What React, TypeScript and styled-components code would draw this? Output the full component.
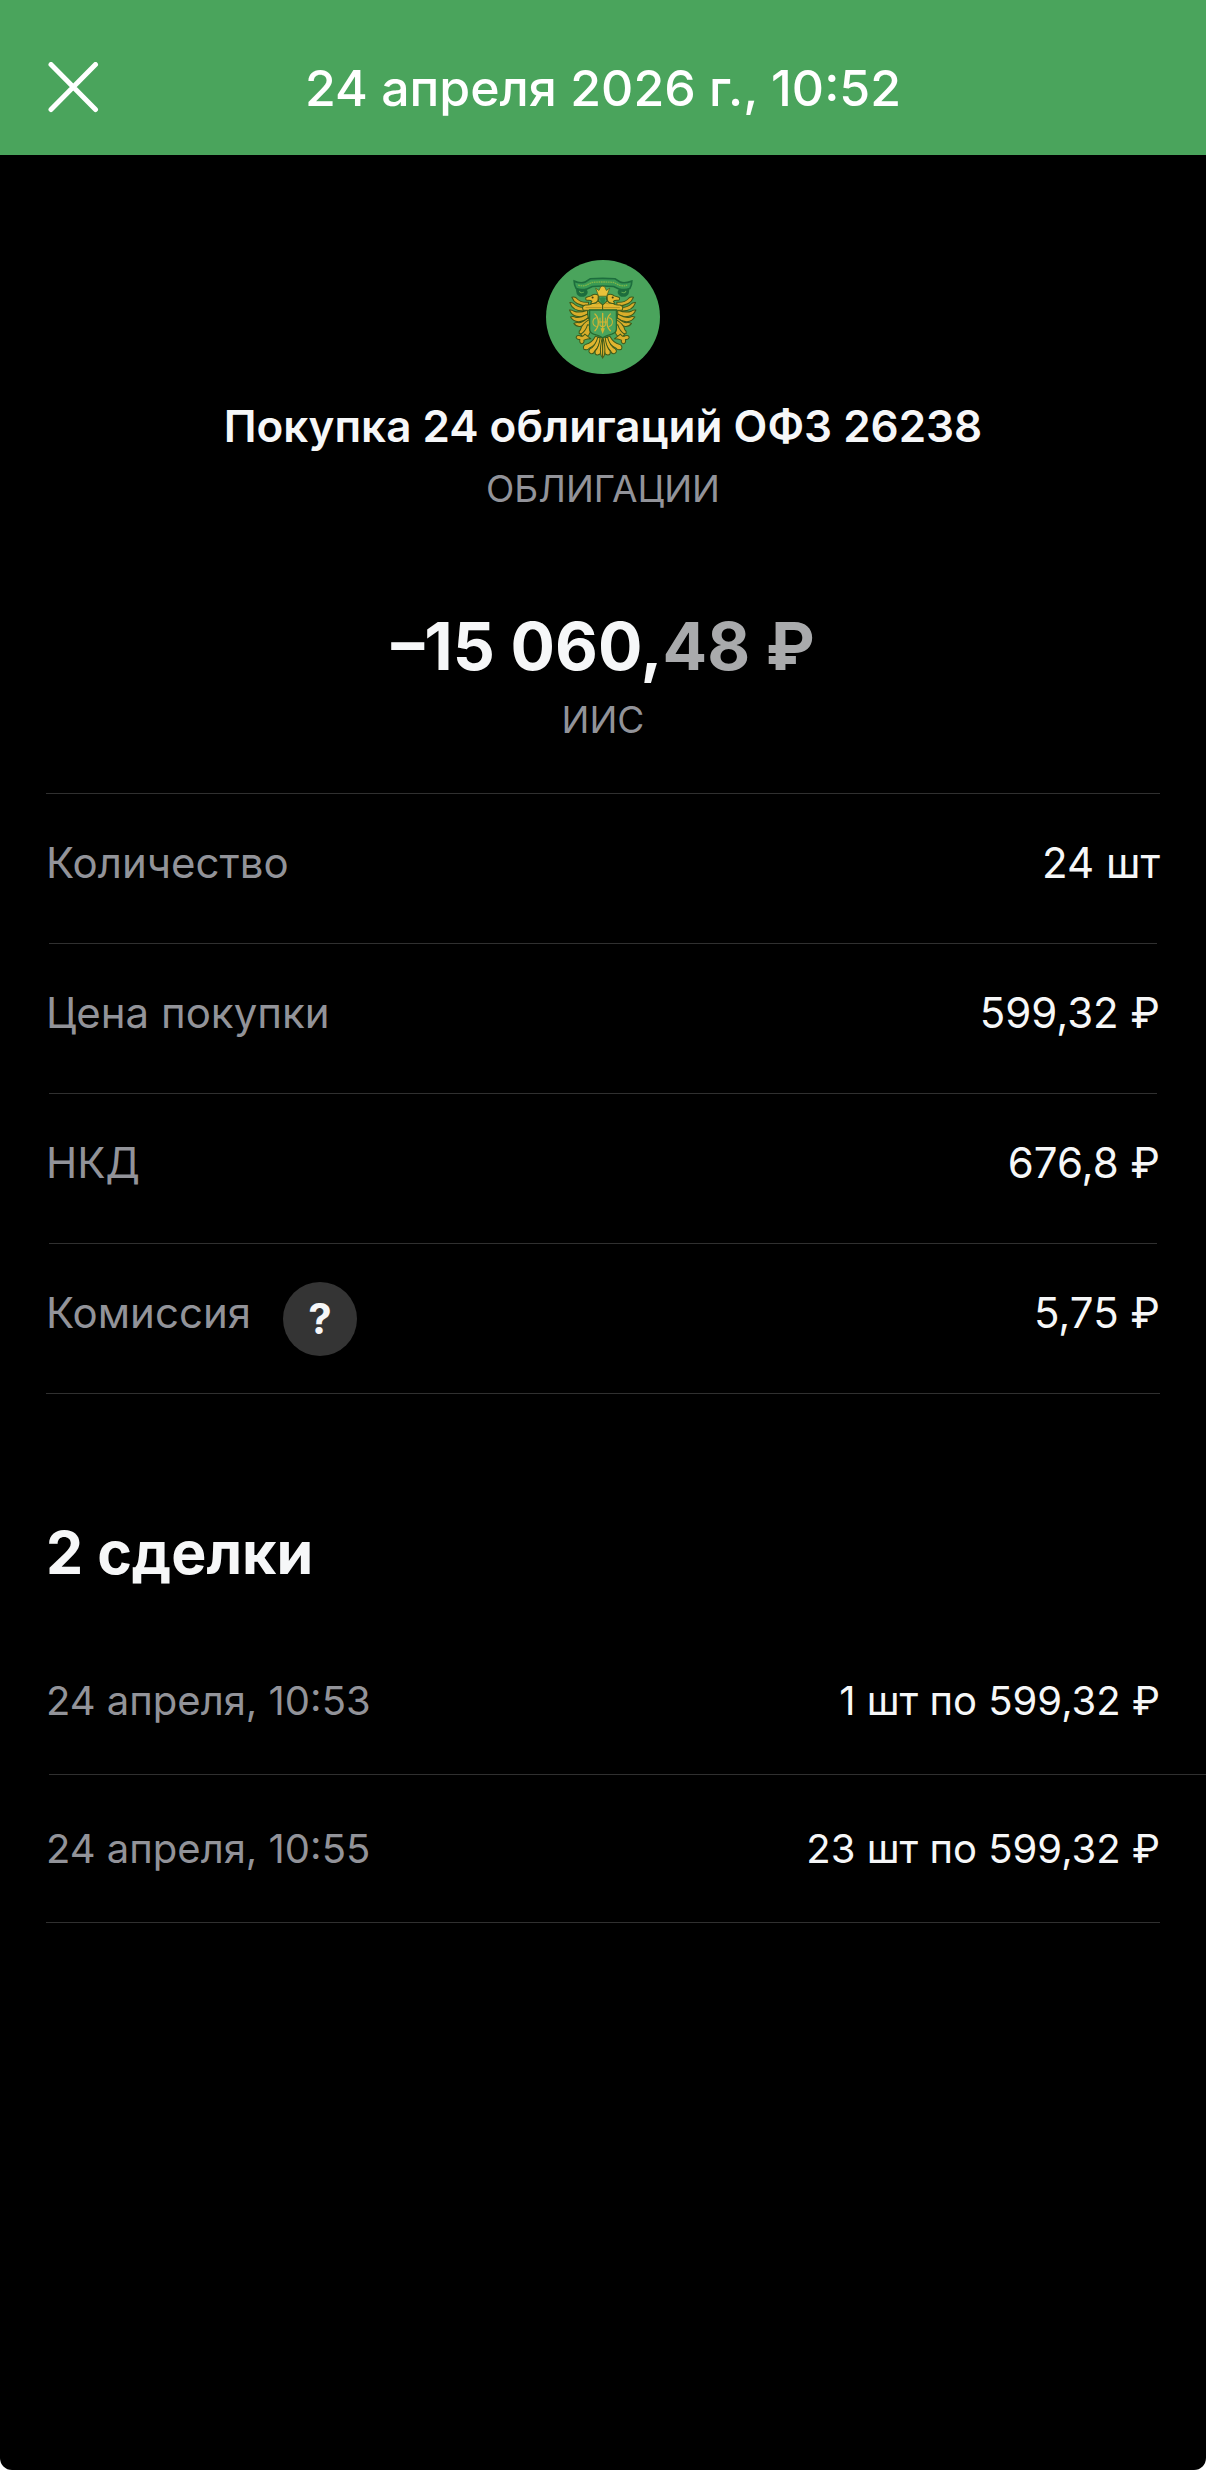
import React from "react";
import styled, { createGlobalStyle } from "styled-components";

const color = {
  green: "#4aa45c",
  text: "#f6f7f8",
  muted: "#929399",
  dim: "#a9aaac",
  line: "#303030",
};

const GlobalStyle = createGlobalStyle`
  *, *::before, *::after { box-sizing: border-box; }
  body {
    margin: 0;
    background: #fff;
    font-family: Inter, "Liberation Sans", sans-serif;
  }
  h1, h2, h3, p, dl, dt, dd { margin: 0; font-weight: 400; }
`;

const Screen = styled.div`
  min-height: 100vh;
  background: #000;
  color: ${color.text};
  border-radius: 0 0 12px 12px;
`;

const Header = styled.header`
  display: grid;
  grid-template-columns: 52px 1fr 52px;
  align-items: center;
  height: 155px;
  padding: 20px 47px 0;
  background: ${color.green};
  color: #fff;
`;

const CloseButton = styled.button`
  display: flex;
  justify-content: center;
  padding: 0;
  border: 0;
  background: none;
  color: inherit;
  cursor: pointer;
`;

const HeaderTitle = styled.h1`
  font-size: 50px;
  line-height: 64px;
  font-weight: 500;
  text-align: center;
`;

const Content = styled.main`
  padding: 105px 46px 0;
`;

const Summary = styled.section`
  display: flex;
  flex-direction: column;
  align-items: center;
  text-align: center;
`;

const OperationTitle = styled.h2`
  margin-top: 26px;
  font-size: 44px;
  line-height: 52px;
  font-weight: 600;
`;

const Caption = styled.p<{ $gap: number }>`
  margin-top: ${({ $gap }) => $gap}px;
  font-size: 37px;
  line-height: 44px;
  color: ${color.muted};
`;

const Amount = styled.p`
  margin-top: 95px;
  font-size: 66px;
  line-height: 80px;
  font-weight: 700;
`;

const Fraction = styled.span`
  color: ${color.dim};
`;

const Details = styled.dl`
  margin-top: 51px;
  border-top: 1px solid ${color.line};
  border-bottom: 1px solid ${color.line};
`;

const Deals = styled.dl`
  margin-top: 38px;
  border-bottom: 1px solid ${color.line};
`;

const Row = styled.div<{ $bleed?: boolean }>`
  & + &::before {
    content: "";
    display: block;
    height: 1px;
    margin: 0 ${({ $bleed }) => ($bleed ? "-46px" : "3px")} 0 3px;
    background: ${color.line};
  }
`;

const DetailBody = styled.div`
  display: flex;
  justify-content: space-between;
  min-height: 149px;
  padding: 38px 0 37px;
  font-size: 42px;
  line-height: 62px;
`;

const DealBody = styled.div`
  display: flex;
  justify-content: space-between;
  padding: 50px 0 49px;
  font-size: 40px;
  line-height: 48px;
`;

const Label = styled.dt`
  display: flex;
  gap: 32px;
  color: ${color.muted};
`;

const HelpButton = styled.button`
  width: 74px;
  height: 74px;
  padding: 0;
  border: 0;
  border-radius: 50%;
  background: #343434;
  color: ${color.text};
  font: 700 42px/74px Inter, "Liberation Sans", sans-serif;
  cursor: pointer;
`;

const DealsTitle = styled.h3`
  margin-top: 123px;
  font-size: 59px;
  line-height: 72px;
  font-weight: 700;
`;

const details = [
  { label: "Количество", value: "24 шт" },
  { label: "Цена покупки", value: "599,32 ₽" },
  { label: "НКД", value: "676,8 ₽" },
  { label: "Комиссия", value: "5,75 ₽", help: true },
];

const deals = [
  { time: "24 апреля, 10:53", value: "1 шт по 599,32 ₽" },
  { time: "24 апреля, 10:55", value: "23 шт по 599,32 ₽" },
];

function EagleHalf() {
  return (
    <g strokeLinejoin="round" strokeLinecap="round">
      {/* ribbon curl */}
      <path d="M132 116q-2 18 10 24q18 4 24-10q2-10-8-12z" fill="#1d6d3d" />
      <path d="M142 124q4 8 12 3" stroke="#63ad52" strokeWidth="3" fill="none" />
      {/* wing feathers */}
      <g fill="#d9ae2b" stroke="#3f5a1a" strokeWidth="3">
        <path d="M168 168C146 168 126 162 119 142q9-2 14 3q12 14 36 12z" />
        <path d="M166 182C140 186 120 178 113 158q9-1 14 5q14 12 40 8z" />
        <path d="M166 194C142 206 120 200 112 180q9-1 14 4q14 6 40-3z" />
        <path d="M168 204C148 220 126 218 115 201q9-3 15 1q14 2 36-10z" />
        <path d="M172 210C156 230 136 236 125 220q9-4 16-2q12-2 28-16z" />
        <path d="M174 216C170 240 156 254 141 250q-2-7 4-11q4-18 26-30z" />
        <path d="M176 226q2 24-12 34q-16 2-18-8q14-8 20-28z" />
      </g>
      {/* shoulder and neck */}
      <path d="M211 181h-58q-6-12 6-16q18 2 24-8l-4-10q6-14 18-10q6 8 0 16l14 12z" fill="#e3b830" stroke="#3f5a1a" strokeWidth="3" />
      <path d="M161 173h46M186 160q8 4 16 0" stroke="#9c8420" strokeWidth="2" fill="none" />
      {/* head */}
      <path d="M198 136q-12-7-22 2l-15 5q-2 9 5 8q9-1 13 3l-4 6q16 4 22-8z" fill="#e3b830" stroke="#3f5a1a" strokeWidth="3" />
      <circle cx="181" cy="143" r="3" fill="#3c3a10" />
      {/* claw */}
      <path d="M158 252q-6 10-14 5q-12-3-12 6q4 7 11 5q-2 11 5 13q9-2 7-11q11-4 21-4z" fill="#d9ae2b" stroke="#3f5a1a" strokeWidth="3" />
      {/* tail */}
      <g fill="#e0b42f" stroke="#3f5a1a" strokeWidth="3">
        <path d="M190 258q-12 22-28 24q-12 5-7 15q11 4 16-3q18-8 30-30z" />
        <path d="M197 260q-8 28-24 36q-7 9 2 14q10 2 12-7q14-12 19-38z" />
        <path d="M204 260q-4 32-15 42q-3 12 7 12q9 0 9-9q6-12 7-42z" />
        <path d="M211 258q-9 34-6 52q1 10 6 13z" />
      </g>
    </g>
  );
}

function Emblem() {
  return (
    <svg width="114" height="114" viewBox="42 31 340 340" role="img" aria-label="ОФЗ">
      <circle cx="212" cy="201" r="170" fill={color.green} />
      <EagleHalf />
      <g transform="translate(422 0) scale(-1 1)">
        <EagleHalf />
      </g>
      <path d="M126 94q18 8 32 3l16-10q37-2 74 0l16 10q12 5 34-3q0 13-6 22q-14 6-31 2l-17-8q-32-3-64 0l-17 8q-17 4-31-2q-6-9-6-22z" fill="#399a54" stroke="#1d6d3d" strokeWidth="5" />
      <path d="M138 106q14 4 24 0l16-8q33-3 66 0l16 8q12 4 24 0" fill="none" stroke="#7fb648" strokeWidth="4" strokeDasharray="5 2" />
      <path d="M199 139l-9-24l10 7l5-11l6-2l6 2l5 11l10-7l-9 24z" fill="#e8c23a" stroke="#3f5a1a" strokeWidth="2" />
      <path d="M202 144q9-4 18 0q-1 12-9 18q-8-6-9-18z" fill="#2d8a4a" />
      <path d="M172 180h80v56q0 12-14 16q-18 4-27 11q-9-7-27-11q-12-4-12-16z" fill={color.green} stroke="#276b2f" strokeWidth="4" />
      <g fill="none" stroke="#d2b534" strokeWidth="4" strokeLinecap="round">
        <path d="M211 190v56M207 236l4 10l4-10" />
        <path d="M188 192q10 8 10 26q0 14-10 24M234 192q-10 8-10 26q0 14 10 24" />
        <path d="M192 203q-10 2-10 13t10 13M230 203q10 2 10 13t-10 13" strokeWidth="3" />
        <path d="M198 216h26M203 204v22q8 8 16 0v-22" strokeWidth="3" />
      </g>
    </svg>
  );
}

export default function App() {
  return (
    <Screen>
      <GlobalStyle />
      <Header>
        <CloseButton type="button" aria-label="Закрыть">
          <svg width="52" height="52" viewBox="0 0 52 52" fill="none" stroke="currentColor" strokeWidth="5" strokeLinecap="round" aria-hidden="true">
            <path d="M4 2.500L48.500 47.500M48.500 2.500L4 47.500" />
          </svg>
        </CloseButton>
        <HeaderTitle>24 апреля 2026 г., 10:52</HeaderTitle>
      </Header>
      <Content>
        <Summary>
          <Emblem />
          <OperationTitle>Покупка 24 облигаций ОФЗ 26238</OperationTitle>
          <Caption $gap={15}>ОБЛИГАЦИИ</Caption>
          <Amount>
            –15 060,<Fraction>48 ₽</Fraction>
          </Amount>
          <Caption $gap={12}>ИИС</Caption>
        </Summary>
        <Details>
          {details.map((item) => (
            <Row key={item.label}>
              <DetailBody>
                <Label>
                  {item.label}
                  {item.help && (
                    <HelpButton type="button" aria-label="О комиссии">
                      ?
                    </HelpButton>
                  )}
                </Label>
                <dd>{item.value}</dd>
              </DetailBody>
            </Row>
          ))}
        </Details>
        <DealsTitle>2 сделки</DealsTitle>
        <Deals>
          {deals.map((deal) => (
            <Row key={deal.time} $bleed>
              <DealBody>
                <Label>{deal.time}</Label>
                <dd>{deal.value}</dd>
              </DealBody>
            </Row>
          ))}
        </Deals>
      </Content>
    </Screen>
  );
}
